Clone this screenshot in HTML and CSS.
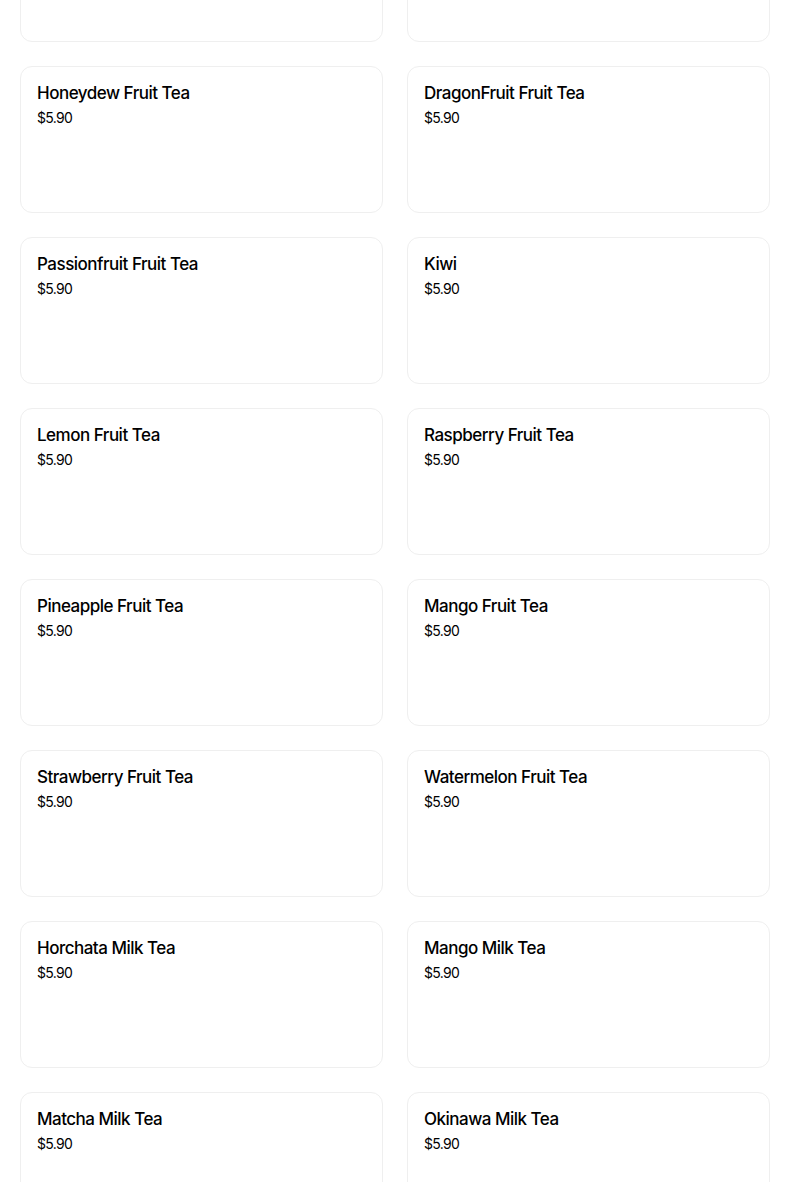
FILE: index.html
```html
<!DOCTYPE html>
<html>
<head>
<meta charset="utf-8">
<link rel="stylesheet" href="styles.css">
</head>
<body>
<div class="grid">
  <div class="card"></div>
  <div class="card"></div>
  <div class="card"><div class="title">Honeydew Fruit Tea</div><div class="price">$5.90</div></div>
  <div class="card"><div class="title">DragonFruit Fruit Tea</div><div class="price">$5.90</div></div>
  <div class="card"><div class="title">Passionfruit Fruit Tea</div><div class="price">$5.90</div></div>
  <div class="card"><div class="title">Kiwi</div><div class="price">$5.90</div></div>
  <div class="card"><div class="title">Lemon Fruit Tea</div><div class="price">$5.90</div></div>
  <div class="card"><div class="title">Raspberry Fruit Tea</div><div class="price">$5.90</div></div>
  <div class="card"><div class="title">Pineapple Fruit Tea</div><div class="price">$5.90</div></div>
  <div class="card"><div class="title">Mango Fruit Tea</div><div class="price">$5.90</div></div>
  <div class="card"><div class="title">Strawberry Fruit Tea</div><div class="price">$5.90</div></div>
  <div class="card"><div class="title">Watermelon Fruit Tea</div><div class="price">$5.90</div></div>
  <div class="card"><div class="title">Horchata Milk Tea</div><div class="price">$5.90</div></div>
  <div class="card"><div class="title">Mango Milk Tea</div><div class="price">$5.90</div></div>
  <div class="card"><div class="title">Matcha Milk Tea</div><div class="price">$5.90</div></div>
  <div class="card"><div class="title">Okinawa Milk Tea</div><div class="price">$5.90</div></div>
</div>
</body>
</html>
```
FILE: styles.css
```css
html, body {
  margin: 0;
  padding: 0;
  background: #ffffff;
  overflow: hidden;
}
body {
  font-family: "Inter", "Liberation Sans", sans-serif;
  color: #000000;
}
.grid {
  display: grid;
  grid-template-columns: 363px 363px;
  column-gap: 24px;
  row-gap: 24px;
  margin: -105px 0 0 20px;
}
.card {
  box-sizing: border-box;
  height: 147px;
  border: 1px solid #efefef;
  border-radius: 12px;
  padding: 14px 16px;
  background: #ffffff;
}
.title {
  font-size: 17px;
  font-weight: 500;
  line-height: 24px;
  letter-spacing: -0.5px;
}
.price {
  font-size: 14px;
  line-height: 20px;
  margin-top: 3px;
  letter-spacing: -0.7px;
}
```
